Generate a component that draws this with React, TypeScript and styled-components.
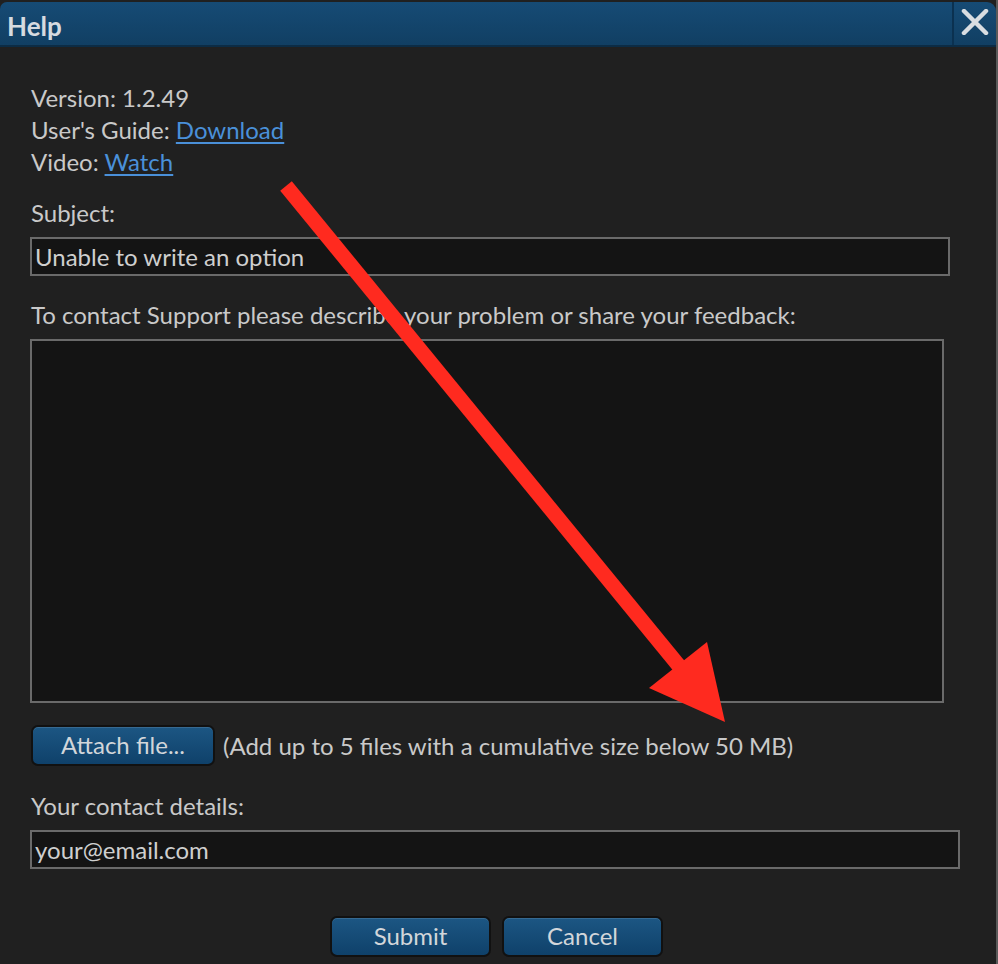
import React from "react";
import styled, { createGlobalStyle } from "styled-components";

const GlobalStyle = createGlobalStyle`
  html, body {
    margin: 0;
    padding: 0;
    background: #1e1e1e;
  }
  body {
    font-family: Lato, "Open Sans", sans-serif;
  }
`;

const Window = styled.div`
  position: relative;
  width: 998px;
  height: 964px;
  box-sizing: border-box;
  padding-top: 2px;
  background: #202020;
  border-right: 2px solid #5a5a5a;
  display: flex;
  flex-direction: column;
  overflow: hidden;
  font-family: Lato, "Open Sans", sans-serif;
  color: #c9c9c9;
`;

const TitleBar = styled.div`
  flex-shrink: 0;
  height: 43px;
  display: flex;
  align-items: stretch;
  background: linear-gradient(#164b75, #113f63);
  border-bottom: 2px solid #0c2c45;
  border-radius: 7px 9px 0 0;
`;

const Title = styled.div`
  flex: 1;
  display: flex;
  align-items: center;
  padding-left: 7px;
  padding-top: 4px;
  font-size: 26px;
  font-weight: 700;
  color: #d6dbe0;
`;

const CloseButton = styled.div`
  width: 42px;
  border-left: 2px solid #0b3150;
  display: flex;
  align-items: center;
  justify-content: center;
  padding-bottom: 3px;
`;

const Body = styled.div`
  flex-shrink: 0;
  display: flex;
  flex-direction: column;
  padding: 35px 0 0 31px;
`;

const InfoLine = styled.div`
  font-size: 24px;
  line-height: 32px;
  height: 32px;
`;

const Link = styled.a`
  color: #4a90d9;
  text-decoration: underline;
  text-underline-offset: 3px;
  cursor: pointer;
`;

const Label = styled.div<{ $top: number }>`
  margin-top: ${(p) => p.$top}px;
  font-size: 24px;
  line-height: 32px;
  height: 32px;
  white-space: nowrap;
`;

const TextInput = styled.div<{ $width: number }>`
  flex-shrink: 0;
  margin-top: 8px;
  margin-left: -1px;
  width: ${(p) => p.$width}px;
  height: 39px;
  box-sizing: border-box;
  border: 2px solid #6a6a6a;
  background: #141414;
  font-size: 24px;
  line-height: 35px;
  padding-left: 3px;
  color: #cfcfcf;
`;

const TextArea = styled.div`
  flex-shrink: 0;
  margin-top: 8px;
  margin-left: -1px;
  width: 914px;
  height: 364px;
  box-sizing: border-box;
  border: 2px solid #6a6a6a;
  background: #141414;
`;

const AttachRow = styled.div`
  margin-top: 22px;
  display: flex;
  align-items: center;
  gap: 8px;
`;

const Button = styled.button<{ $width: number }>`
  flex-shrink: 0;
  width: ${(p) => p.$width}px;
  height: 41px;
  box-sizing: border-box;
  border: 2px solid #111111;
  border-radius: 7px;
  background: linear-gradient(#1c5683, #0f416a);
  box-shadow: inset 0 1px 0 rgba(255, 255, 255, 0.12);
  color: #d2d6da;
  font-family: Lato, "Open Sans", sans-serif;
  font-size: 24px;
  padding: 0 0 2px;
  cursor: pointer;
`;

const Hint = styled.span`
  font-size: 24px;
  color: #c9c9c9;
  white-space: nowrap;
`;

const Footer = styled.div`
  margin-top: 47px;
  margin-left: -31px;
  display: flex;
  justify-content: center;
  gap: 11px;
  padding-right: 3px;
`;

const ArrowLayer = styled.svg`
  position: absolute;
  left: 0;
  top: 0;
  pointer-events: none;
`;

export default function App() {
  return (
    <>
      <GlobalStyle />
      <Window>
        <TitleBar>
          <Title>Help</Title>
          <CloseButton>
            <svg width="28" height="26" viewBox="0 0 28 26">
              <path
                d="M3 2 L25 24 M25 2 L3 24"
                stroke="#d8dde2"
                strokeWidth="4.5"
                strokeLinecap="round"
              />
            </svg>
          </CloseButton>
        </TitleBar>
        <Body>
          <InfoLine>Version: 1.2.49</InfoLine>
          <InfoLine>
            User's Guide: <Link>Download</Link>
          </InfoLine>
          <InfoLine>
            Video: <Link>Watch</Link>
          </InfoLine>
          <Label $top={19}>Subject:</Label>
          <TextInput $width={920}>Unable to write an option</TextInput>
          <Label $top={23}>
            To contact Support please describe your problem or share your feedback:
          </Label>
          <TextArea />
          <AttachRow>
            <Button $width={184}>Attach file...</Button>
            <Hint>(Add up to 5 files with a cumulative size below 50 MB)</Hint>
          </AttachRow>
          <Label $top={24}>Your contact details:</Label>
          <TextInput $width={930}>your@email.com</TextInput>
          <Footer>
            <Button $width={161}>Submit</Button>
            <Button $width={161}>Cancel</Button>
          </Footer>
        </Body>
        <ArrowLayer width="998" height="964" viewBox="0 0 998 964">
          <line x1="286" y1="186" x2="684" y2="672" stroke="#ff2a1f" strokeWidth="15" />
          <polygon points="707,642 649,688 725,722" fill="#ff2a1f" />
        </ArrowLayer>
      </Window>
    </>
  );
}
